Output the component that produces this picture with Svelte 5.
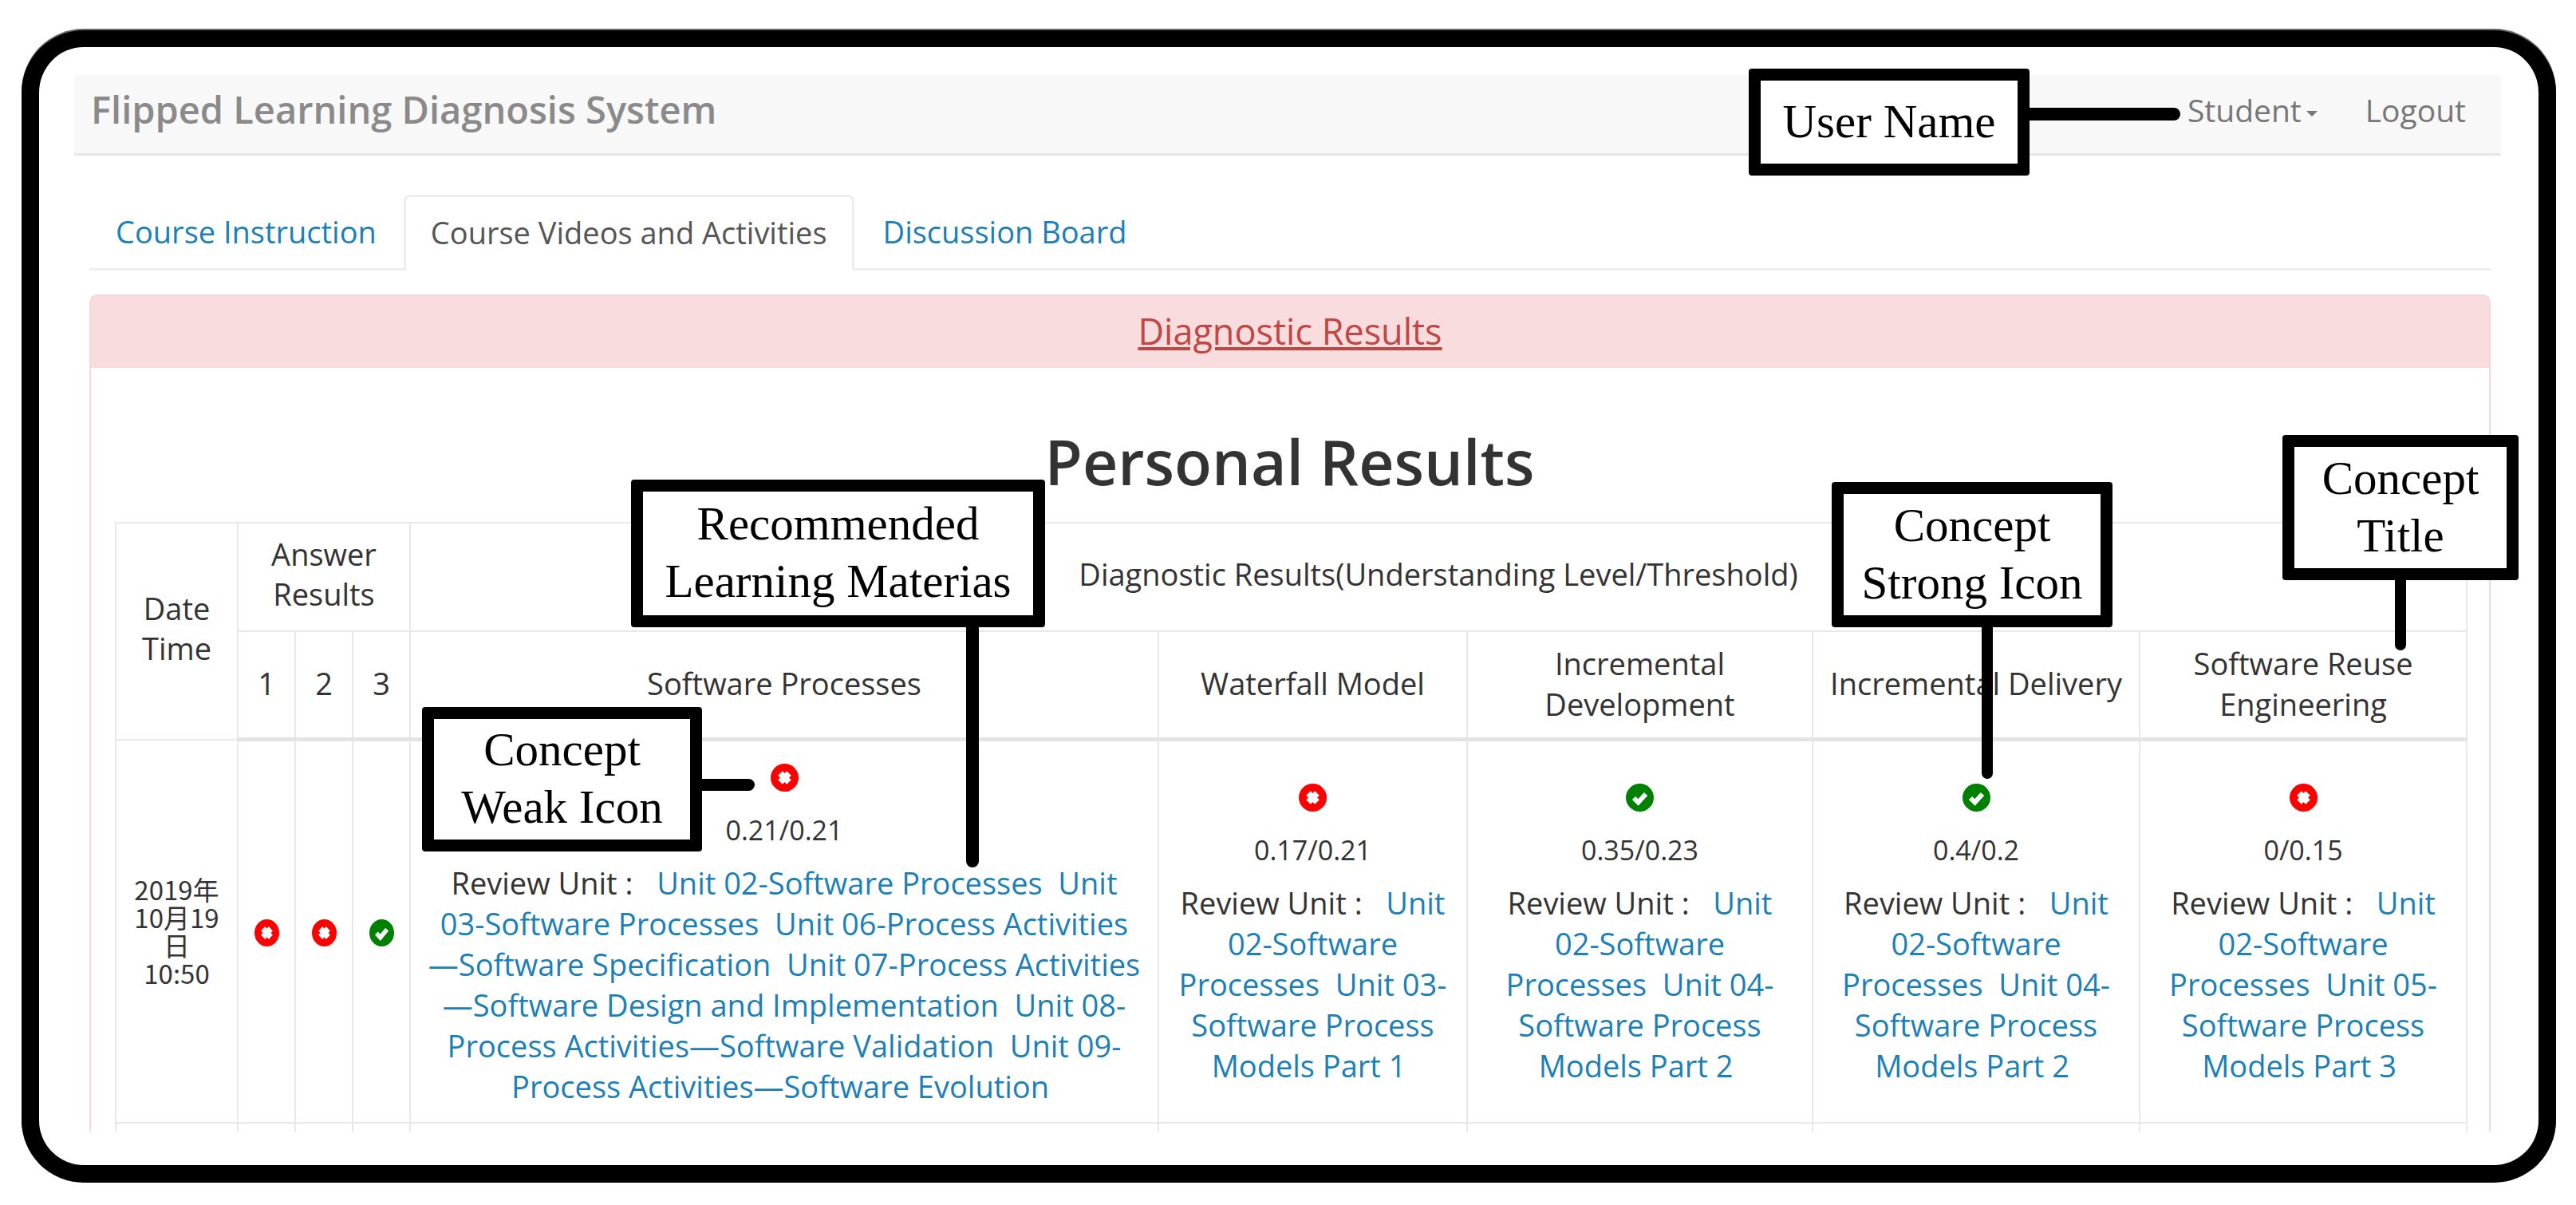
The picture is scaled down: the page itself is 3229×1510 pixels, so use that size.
<script>
  const first = ['Unit 02-Software Processes','Unit 03-Software Processes','Unit 06-Process Activities—Software Specification','Unit 07-Process Activities—Software Design and Implementation','Unit 08-Process Activities—Software Validation','Unit 09-Process Activities—Software Evolution'];
  const cols = [
    { ok: false, v: '0.17/0.21', units: ['Unit 02-Software Processes','Unit 03-Software Process Models Part 1'] },
    { ok: true, v: '0.35/0.23', units: ['Unit 02-Software Processes','Unit 04-Software Process Models Part 2'] },
    { ok: true, v: '0.4/0.2', units: ['Unit 02-Software Processes','Unit 04-Software Process Models Part 2'] },
    { ok: false, v: '0/0.15', units: ['Unit 02-Software Processes','Unit 05-Software Process Models Part 3'] }
  ];
</script>

{#snippet mark(ok, cls)}
  <svg class={cls} viewBox="0 0 35 35" preserveAspectRatio="none" aria-hidden="true">
    {#if ok}
      <circle cx="17.5" cy="17.5" r="17.5" fill="#008000"/>
      <path d="M10 18l5.5 5.5L25 13" fill="none" stroke="#fff" stroke-width="6"/>
    {:else}
      <circle cx="17.5" cy="17.5" r="17.5" fill="#ff0000"/>
      <path d="M12 12l11 11M23 12L12 23" fill="none" stroke="#fff" stroke-width="8"/>
    {/if}
  </svg>
{/snippet}

{#snippet review(units)}
  <div class="review">Review Unit :&nbsp;&nbsp;{' '}{#each units as u}<a href="#u">{u}</a>&nbsp;{' '}{/each}</div>
{/snippet}

<div class="stage">
  <div class="frame">
    <nav class="navbar">
      <span class="brand">Flipped Learning Diagnosis System</span>
      <div class="navright">
        <span class="nitem student">Student<i class="caret"></i></span>
        <span class="nitem">Logout</span>
      </div>
    </nav>

    <div class="content">
      <ul class="tabs">
        <li class="tab one"><a href="#a">Course Instruction</a></li>
        <li class="tab active">Course Videos and Activities</li>
        <li class="tab three"><a href="#c">Discussion Board</a></li>
      </ul>

      <section class="panel">
        <div class="phead"><a href="#d">Diagnostic Results</a></div>
        <div class="pbody">
          <h1>Personal Results</h1>
          <table>
            <colgroup>
              <col class="c0"/><col class="c1"/><col class="c1"/><col class="c1"/>
              <col class="c2"/><col class="c3"/><col class="c4"/><col class="c5"/><col class="c5"/>
            </colgroup>
            <thead>
              <tr class="r1">
                <th rowspan="2">Date<br/>Time</th>
                <th colspan="3">Answer<br/>Results</th>
                <th colspan="5">Diagnostic Results(Understanding Level/Threshold)</th>
              </tr>
              <tr class="r2">
                <th>1</th><th>2</th><th>3</th>
                <th>Software Processes</th>
                <th>Waterfall Model</th>
                <th>Incremental Development</th>
                <th>Incremental Delivery</th>
                <th>Software Reuse Engineering</th>
              </tr>
            </thead>
            <tbody>
              <tr class="r3">
                <td class="date">2019年<br/>10月19<br/>日<br/>10:50</td>
                <td class="ans">{@render mark(false, 'ic small')}</td>
                <td class="ans">{@render mark(false, 'ic small')}</td>
                <td class="ans">{@render mark(true, 'ic small')}</td>
                <td>
                  {@render mark(false, 'ic')}
                  <div class="val">0.21/0.21</div>
                  {@render review(first)}
                </td>
                {#each cols as c}
                  <td>
                    {@render mark(c.ok, 'ic')}
                    <div class="val">{c.v}</div>
                    {@render review(c.units)}
                  </td>
                {/each}
              </tr>
              <tr class="r4">
                <td></td><td></td><td></td><td></td><td></td><td></td><td></td><td></td><td></td>
              </tr>
            </tbody>
          </table>
        </div>
      </section>
    </div>
  </div>

  <div class="call user">User Name</div>
  <i class="wire w-user"></i>
  <div class="call rec">Recommended<br/>Learning Materias</div>
  <i class="wire w-rec"></i>
  <div class="call weak">Concept<br/>Weak Icon</div>
  <i class="wire w-weak"></i>
  <div class="call strong">Concept<br/>Strong Icon</div>
  <i class="wire w-strong"></i>
  <div class="call title">Concept<br/>Title</div>
  <i class="wire w-title"></i>
</div>

<style>
  :global(body) { margin: 0; background: #fff; }
  .stage { position: relative; width: 3229px; height: 1510px; overflow: hidden; font-family: "Open Sans", "Noto Sans CJK TC", sans-serif; color: #333; font-size: 38px; }
  .frame { box-sizing: border-box; width: 3177px; height: 1444px; margin: 0 0 0 27px; position: relative; top: 38px; border: 21px solid #000; border-width: 21px 22px 22px; border-radius: 78px; padding: 35px 47px 0 44px; box-shadow: 0 -2px 0 #666; overflow: hidden; background: #fff; }
  .navbar { height: 101px; box-sizing: border-box; background: #f8f8f8; border-bottom: 3px solid #e7e7e7; display: flex; justify-content: space-between; align-items: center; padding: 0 44px 11px 21px; color: #777; }
  .brand { font-size: 47px; font-weight: 600; color: #8a8a8a; margin-bottom: 2px; }
  .navright { display: flex; gap: 60px; }
  .nitem { font-size: 39px; color: #777; }
  .caret { display: inline-block; margin-left: 6px; vertical-align: middle; border-top: 7px solid #777; border-left: 7px solid transparent; border-right: 7px solid transparent; }
  .content { margin: 49px 13px 0 19px; height: 1174px; overflow: hidden; }
  .tabs { display: flex; list-style: none; margin: 0; padding: 0; height: 95px; box-sizing: border-box; border-bottom: 3px solid #eee; }
  .tab { height: 95px; box-sizing: border-box; display: flex; align-items: center; font-size: 38px; padding-bottom: 4px; }
  .tab a { color: #1b80b8; text-decoration: none; }
  .tab.one { padding: 0 34px 4px 33px; }
  .tab.three { padding: 0 34px 4px 36px; }
  .tab.active { padding: 0 31px 4px; border: 3px solid #eee; border-bottom: 0; border-radius: 8px 8px 0 0; background: #fff; color: #555; }
  .panel { margin-top: 30px; border: 2px solid #f6d8dc; border-bottom: 0; border-radius: 10px 10px 0 0; }
  .phead { height: 90px; box-sizing: border-box; padding-bottom: 4px; background: #f9dcde; display: flex; align-items: center; justify-content: center; }
  .phead a { color: #c14745; text-decoration: underline; font-size: 45px; }
  .pbody { padding: 0 31px 0 30px; }
  h1 { margin: 64px 0 21px; height: 108px; line-height: 108px; text-align: center; font-size: 77px; font-weight: 600; color: #333; }
  table { table-layout: fixed; border-collapse: collapse; width: 2945px; text-align: center; line-height: 51px; }
  .c0 { width: 153px; } .c1 { width: 72px; } .c2 { width: 938px; } .c3 { width: 387px; } .c4 { width: 433px; } .c5 { width: 410px; }
  th, td { border: 2px solid #e8e8e8; padding: 8px 18px 0; font-weight: 400; vertical-align: middle; font-size: 38px; }
  th { padding: 0 8px 8px; }
  .r2 th { padding-bottom: 3px; }
  thead tr.r2 th { border-bottom: 5px solid #e4e4e4; }
  .r1 th { height: 126px; line-height: 50px; }
  .r2 th { height: 129px; }
  .r3 td { height: 469px; }
  .r3 td.date { height: 477px; }
  .r3 td.ans { height: 475px; }
  .r4 td { height: 40px; padding: 0; }
  td.date { font-size: 33px; line-height: 35px; padding: 0 8px; font-family: "Noto Sans CJK TC", sans-serif; }
  td.ans { padding: 2px 0 0; }
  .ic { display: block; width: 35px; height: 35px; margin: 0 auto; }
  .ic.small { width: 31px; height: 34px; }
  .val { font-size: 34px; margin-top: 26px; line-height: 44px; }
  .review { margin-top: 19px; }
  .review a { color: #1b80b8; text-decoration: none; }

  .call { position: absolute; box-sizing: border-box; border: 15px solid #000; border-radius: 4px; background: #fff; color: #000; font-family: "Liberation Serif", serif; font-size: 59px; line-height: 72px; text-align: center; display: flex; align-items: center; justify-content: center; padding-bottom: 3px; }
  .wire { position: absolute; background: #000; border-radius: 0 8px 8px 0; }
  .user { left: 2192px; top: 86px; width: 352px; height: 134px; }
  .w-user { left: 2544px; top: 135px; width: 189px; height: 16px; }
  .rec { left: 791px; top: 601px; width: 519px; height: 185px; }
  .w-rec { left: 1211px; top: 786px; width: 16px; height: 301px; border-radius: 0 0 8px 8px; }
  .weak { left: 529px; top: 886px; width: 351px; height: 181px; }
  .w-weak { left: 880px; top: 976px; width: 66px; height: 15px; }
  .strong { left: 2296px; top: 604px; width: 352px; height: 182px; }
  .w-strong { left: 2484px; top: 786px; width: 14px; height: 190px; border-radius: 0 0 7px 7px; }
  .title { left: 2861px; top: 545px; width: 296px; height: 182px; }
  .w-title { left: 3002px; top: 727px; width: 14px; height: 88px; border-radius: 0 0 7px 7px; }
</style>
